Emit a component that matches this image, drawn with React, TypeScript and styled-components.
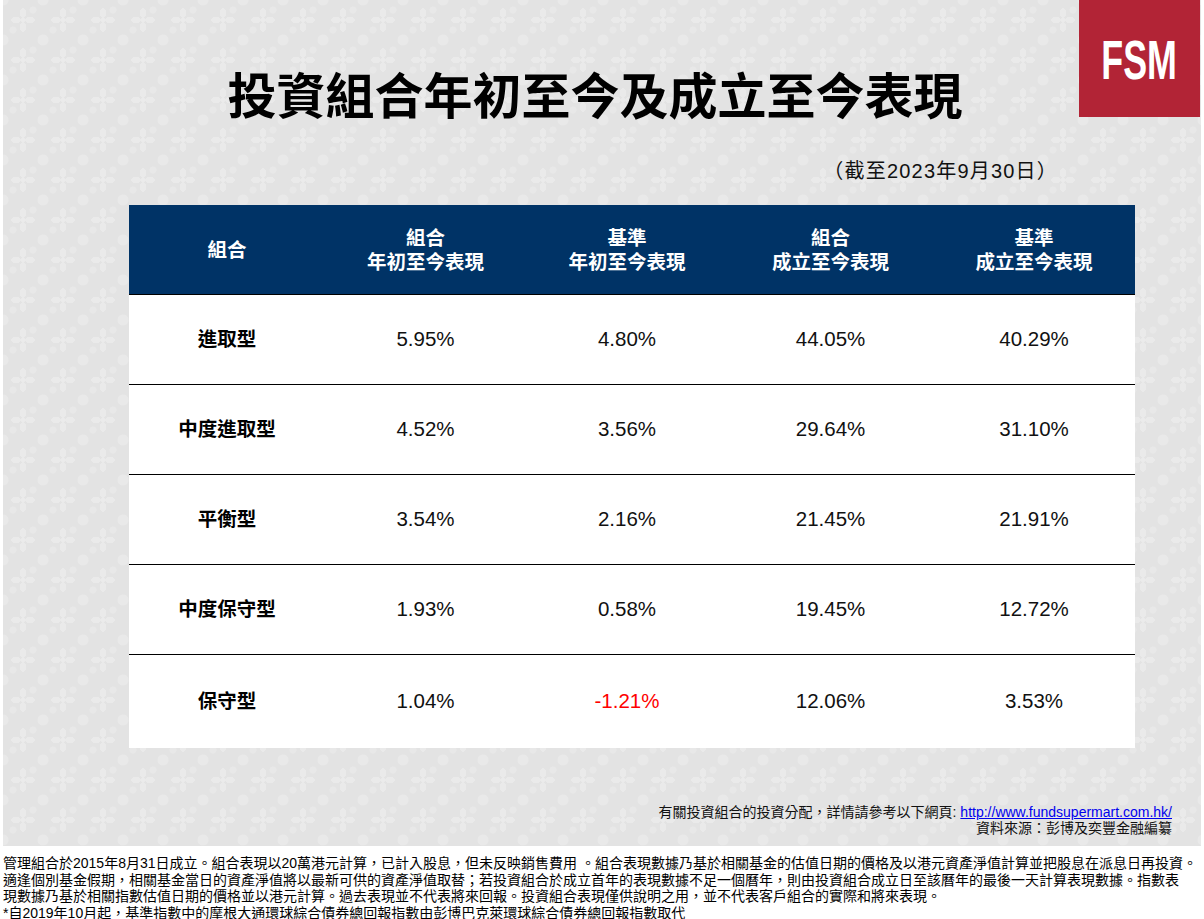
import styled, { createGlobalStyle } from 'styled-components'

const GlobalStyle = createGlobalStyle`
	html, body {
		margin: 0;
		padding: 0;
		overflow: hidden;
		background: #ffffff;
	}
	body {
		font-family: "Liberation Sans", "Noto Sans CJK TC", sans-serif;
		color: #000;
	}
`

interface PortfolioRow {
	name: string
	ytd: number
	ytdBench: number
	inception: number
	inceptionBench: number
}

const rows: PortfolioRow[] = [
	{ name: '進取型', ytd: 5.95, ytdBench: 4.8, inception: 44.05, inceptionBench: 40.29 },
	{ name: '中度進取型', ytd: 4.52, ytdBench: 3.56, inception: 29.64, inceptionBench: 31.1 },
	{ name: '平衡型', ytd: 3.54, ytdBench: 2.16, inception: 21.45, inceptionBench: 21.91 },
	{ name: '中度保守型', ytd: 1.93, ytdBench: 0.58, inception: 19.45, inceptionBench: 12.72 },
	{ name: '保守型', ytd: 1.04, ytdBench: -1.21, inception: 12.06, inceptionBench: 3.53 },
]

const headers = [['組合'], ['組合', '年初至今表現'], ['基準', '年初至今表現'], ['組合', '成立至今表現'], ['基準', '成立至今表現']]

const footnoteLines = [
	'管理組合於2015年8月31日成立。組合表現以20萬港元計算，已計入股息，但未反映銷售費用 。組合表現數據乃基於相關基金的估值日期的價格及以港元資產淨值計算並把股息在派息日再投資。',
	'適逢個別基金假期，相關基金當日的資產淨值將以最新可供的資產淨值取替；若投資組合於成立首年的表現數據不足一個曆年，則由投資組合成立日至該曆年的最後一天計算表現數據。指數表',
	'現數據乃基於相關指數估值日期的價格並以港元計算。過去表現並不代表將來回報。投資組合表現僅供說明之用，並不代表客戶組合的實際和將來表現。',
	'*自2019年10月起，基準指數中的摩根大通環球綜合債券總回報指數由彭博巴克萊環球綜合債券總回報指數取代',
]

const fmt = (v: number) => `${v.toFixed(2)}%`

const App = () => {
	return (
		<>
			<GlobalStyle />
			<Panel>
				<Logo>
					<LogoText>FSM</LogoText>
				</Logo>
				<Title>投資組合年初至今及成立至今表現</Title>
				<DateLine>（截至2023年9月30日）</DateLine>
				<Table>
					<HeaderRow>
						{headers.map((h, i) => (
							<HeaderCell key={`head-${i}`}>
								{h.map((line) => (
									<HeaderLine key={line}>{line}</HeaderLine>
								))}
							</HeaderCell>
						))}
					</HeaderRow>
					{rows.map((r, i) => (
						<Row key={r.name} $last={i === rows.length - 1}>
							<Label>{r.name}</Label>
							<Value>{fmt(r.ytd)}</Value>
							<Value $negative={r.ytdBench < 0}>{fmt(r.ytdBench)}</Value>
							<Value>{fmt(r.inception)}</Value>
							<Value>{fmt(r.inceptionBench)}</Value>
						</Row>
					))}
				</Table>
				<Sources>
					<div>
						有關投資組合的投資分配，詳情請參考以下網頁: <Link href="#">http://www.fundsupermart.com.hk/</Link>
					</div>
					<div>資料來源：彭博及奕豐金融編纂</div>
				</Sources>
			</Panel>
			<Footnote>
				{footnoteLines.map((line) => (
					<FootLine key={line}>{line}</FootLine>
				))}
			</Footnote>
		</>
	)
}

export default App

const Panel = styled.div`
	position: relative;
	margin: 0 3px;
	height: 846px;
	box-sizing: border-box;
	padding-top: 68px;
	display: flex;
	flex-direction: column;
	background-color: #e3e3e3;
	background-image: radial-gradient(circle at 20px 20px, #ebebeb 0 2px, transparent 2.5px),
		radial-gradient(ellipse 3px 5px at 20px 13px, #eaeaea 0 100%, transparent 100%),
		radial-gradient(ellipse 3px 5px at 20px 27px, #eaeaea 0 100%, transparent 100%),
		radial-gradient(ellipse 5px 3px at 13px 20px, #eaeaea 0 100%, transparent 100%),
		radial-gradient(ellipse 5px 3px at 27px 20px, #eaeaea 0 100%, transparent 100%),
		radial-gradient(circle at 0 0, #e9e9e9 0 5px, transparent 6px),
		radial-gradient(circle at 40px 0, #e9e9e9 0 5px, transparent 6px),
		radial-gradient(circle at 0 40px, #e9e9e9 0 5px, transparent 6px),
		radial-gradient(circle at 40px 40px, #e9e9e9 0 5px, transparent 6px),
		radial-gradient(circle at 10px 30px, #e8e8e8 0 3px, transparent 4px),
		radial-gradient(circle at 30px 10px, #e8e8e8 0 3px, transparent 4px);
	background-size: 40px 40px;
`

const Logo = styled.div`
	position: absolute;
	top: 0;
	right: 1px;
	width: 121px;
	height: 117px;
	background: #b22436;
	display: flex;
	align-items: center;
	justify-content: center;
`

const LogoText = styled.span`
	display: inline-block;
	color: #ffffff;
	font-family: "Liberation Sans", sans-serif;
	font-weight: 700;
	font-size: 56px;
	line-height: 56px;
	transform: scaleX(0.64);
	margin-top: 2px;
`

const Title = styled.h1`
	margin: 0;
	padding-right: 14px;
	text-align: center;
	font-family: "Noto Sans CJK TC", sans-serif;
	font-weight: 700;
	font-size: 49px;
	line-height: 49px;
	color: #000;
`

const DateLine = styled.div`
	margin-top: 44px;
	padding-right: 143px;
	text-align: right;
	font-size: 20px;
	line-height: 20px;
	letter-spacing: 1.2px;
	color: #111;
`

const Table = styled.div`
	margin-top: 23.5px;
	margin-left: 126px;
	width: 1006px;
	background: #ffffff;
`

const columns = '196px 201px 202px 205px 202px'

const HeaderRow = styled.div`
	display: grid;
	grid-template-columns: ${columns};
	height: 89px;
	background: #003366;
	border-bottom: 1px solid #000;
`

const HeaderCell = styled.div`
	display: flex;
	flex-direction: column;
	align-items: center;
	justify-content: center;
	color: #ffffff;
	font-family: "Noto Sans CJK TC", sans-serif;
	font-weight: 700;
	font-size: 19.5px;
`

const HeaderLine = styled.div`
	height: 24px;
	line-height: 24px;
`

const Row = styled.div<{ $last?: boolean }>`
	display: grid;
	grid-template-columns: ${columns};
	height: ${(p) => (p.$last ? '93px' : '89px')};
	border-bottom: ${(p) => (p.$last ? 'none' : '1px solid #000')};
	align-items: center;
`

const Label = styled.div`
	text-align: center;
	font-family: "Noto Sans CJK TC", sans-serif;
	font-weight: 700;
	font-size: 19.5px;
	margin-top: -3px;
`

const Value = styled.div<{ $negative?: boolean }>`
	text-align: center;
	font-size: 20.5px;
	color: ${(p) => (p.$negative ? '#ff0000' : '#111')};
`

const Sources = styled.div`
	margin-top: 56px;
	padding-right: 29px;
	text-align: right;
	font-size: 14px;
	line-height: 16px;
	color: #111;
`

const Link = styled.a`
	color: #0000ee;
	text-decoration: underline;
`

const Footnote = styled.div`
	padding: 9px 0 0 3px;
	font-size: 14px;
	line-height: 16.5px;
	color: #000;
`

const FootLine = styled.div`
	white-space: nowrap;
`
